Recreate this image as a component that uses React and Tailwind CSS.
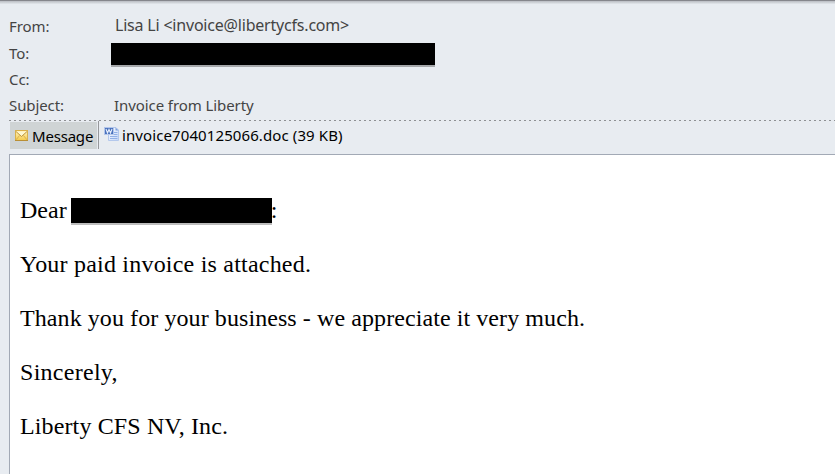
import React from "react";

const paragraphs = [
  { text: "Your paid invoice is attached.", spacing: "tracking-[0.21px]" },
  { text: "Thank you for your business - we appreciate it very much.", spacing: "tracking-[0.08px]" },
  { text: "Sincerely,", spacing: "tracking-[0.28px]" },
  { text: "Liberty CFS NV, Inc.", spacing: "tracking-[0.13px]" },
];

const EnvelopeIcon = () => (
  <svg width="13" height="11" viewBox="0 0 13 11" className="shrink-0">
    <defs>
      <linearGradient id="env" x1="0" y1="0" x2="0" y2="1">
        <stop offset="0" stopColor="#fff3bd" />
        <stop offset="1" stopColor="#f5cb4a" />
      </linearGradient>
    </defs>
    <rect x="0.5" y="0.5" width="12" height="10" fill="url(#env)" stroke="#d9b04c" />
    <path d="M0 10.5h13" stroke="#b98f35" />
    <path d="M1.5 1.5h10L6.5 6z" fill="#fff8d2" />
    <path d="M1 1.500l5.500 5 5.500-5" fill="none" stroke="#b58d3c" strokeWidth="0.9" />
    <path d="M1 9.800l3.600-4.300M12 9.800L8.400 5.500" fill="none" stroke="#cfa548" strokeWidth="0.8" />
  </svg>
);

const WordIcon = () => (
  <svg width="16" height="16" viewBox="0 0 16 16" className="shrink-0">
    <defs>
      <linearGradient id="page" x1="0" y1="0" x2="1" y2="1">
        <stop offset="0" stopColor="#ffffff" />
        <stop offset="1" stopColor="#c3d6f8" />
      </linearGradient>
    </defs>
    <path d="M4.500 1.500h7.500l2.500 2.500v10.500h-10z" fill="url(#page)" stroke="#b4c8ec" />
    <path d="M11.500 1.500v3h3z" fill="#7d9fdc" />
    <path d="M10 6.500h3.500M10 8.500h3.500M6 10.500h7.500M6 12.500h7.500" stroke="#92b0e6" />
    <rect x="0.500" y="1.500" width="9" height="7" fill="#4a72bd" stroke="#b3c6ea" />
    <path d="M2 3l1.500 4L5 3.500 6.500 7 8 3" fill="none" stroke="#e8effc" strokeWidth="1.100" />
  </svg>
);

const HeaderRow = ({ label, className, children }) => (
  <div className={`flex ${className}`}>
    <span className="w-[105px] shrink-0 tracking-[-0.1px]">{label}</span>
    {children}
  </div>
);

const App = () => {
  return (
    <div className="h-screen overflow-hidden flex flex-col bg-[#e8ecf1] pl-[9px] font-['Noto_Sans','Open_Sans',sans-serif] text-[#444]">
      <div className="-ml-[9px] h-px shrink-0 bg-[#85868c]" />
      <div className="-ml-[9px] h-[3px] shrink-0 bg-linear-to-b from-[#b9bcc2] to-[#e3e7ec]" />

      <div className="h-[116px] shrink-0 pt-[9px] text-[15px] leading-[26px]">
        <HeaderRow label="From:" className="h-[27px]">
          <span className="-mt-px ml-px text-[16px] tracking-[-0.2px] whitespace-nowrap">
            Lisa Li &lt;invoice@libertycfs.com&gt;
          </span>
        </HeaderRow>
        <HeaderRow label="To:" className="h-[26px]">
          <span className="-ml-[3px] mt-[3px] w-[324px] h-[22px] bg-black shadow-[0_2px_0_#a5a7aa]" />
        </HeaderRow>
        <HeaderRow label="Cc:" className="h-[26px]" />
        <HeaderRow label="Subject:" className="h-[26px]">
          <span className="tracking-[-0.08px]">Invoice from Liberty</span>
        </HeaderRow>
      </div>

      <div className="h-px shrink-0 bg-[repeating-linear-gradient(90deg,#8e9093_0_2px,transparent_2px_5px)]" />

      <div className="flex h-[33px] shrink-0 text-[15px] text-black">
        <div className="ml-px mt-px flex h-[27px] w-[87px] items-center bg-[#cfd4d5] pl-[5px]">
          <EnvelopeIcon />
          <span className="ml-1 leading-[26px] tracking-[-0.2px]">Message</span>
        </div>
        <div className="ml-[1px] h-[28px] w-px bg-[#96989b]" />
        <div className="flex h-[28px] items-center pl-[5px]">
          <div className="-mt-[3px]">
            <WordIcon />
          </div>
          <span className="ml-[2px] leading-[26px] tracking-[0.1px] whitespace-nowrap">
            invoice7040125066.doc (39 KB)
          </span>
        </div>
      </div>

      <div className="flex-1 border-t border-l border-[#a2a9b5] bg-white pl-[10px] pt-[41px] font-['Liberation_Serif',serif] text-[24px] leading-[28px] text-black">
        <div className="mb-[26px] flex">
          <span>Dear</span>
          <span className="ml-1 mt-[2px] h-[25px] w-[201px] bg-black shadow-[0_2px_0_#bdbdbd]" />
          <span className="-ml-px">:</span>
        </div>
        {paragraphs.map(({ text, spacing }) => (
          <p key={text} className={`mb-[26px] whitespace-nowrap ${spacing}`}>
            {text}
          </p>
        ))}
      </div>
    </div>
  );
};

export default App;
